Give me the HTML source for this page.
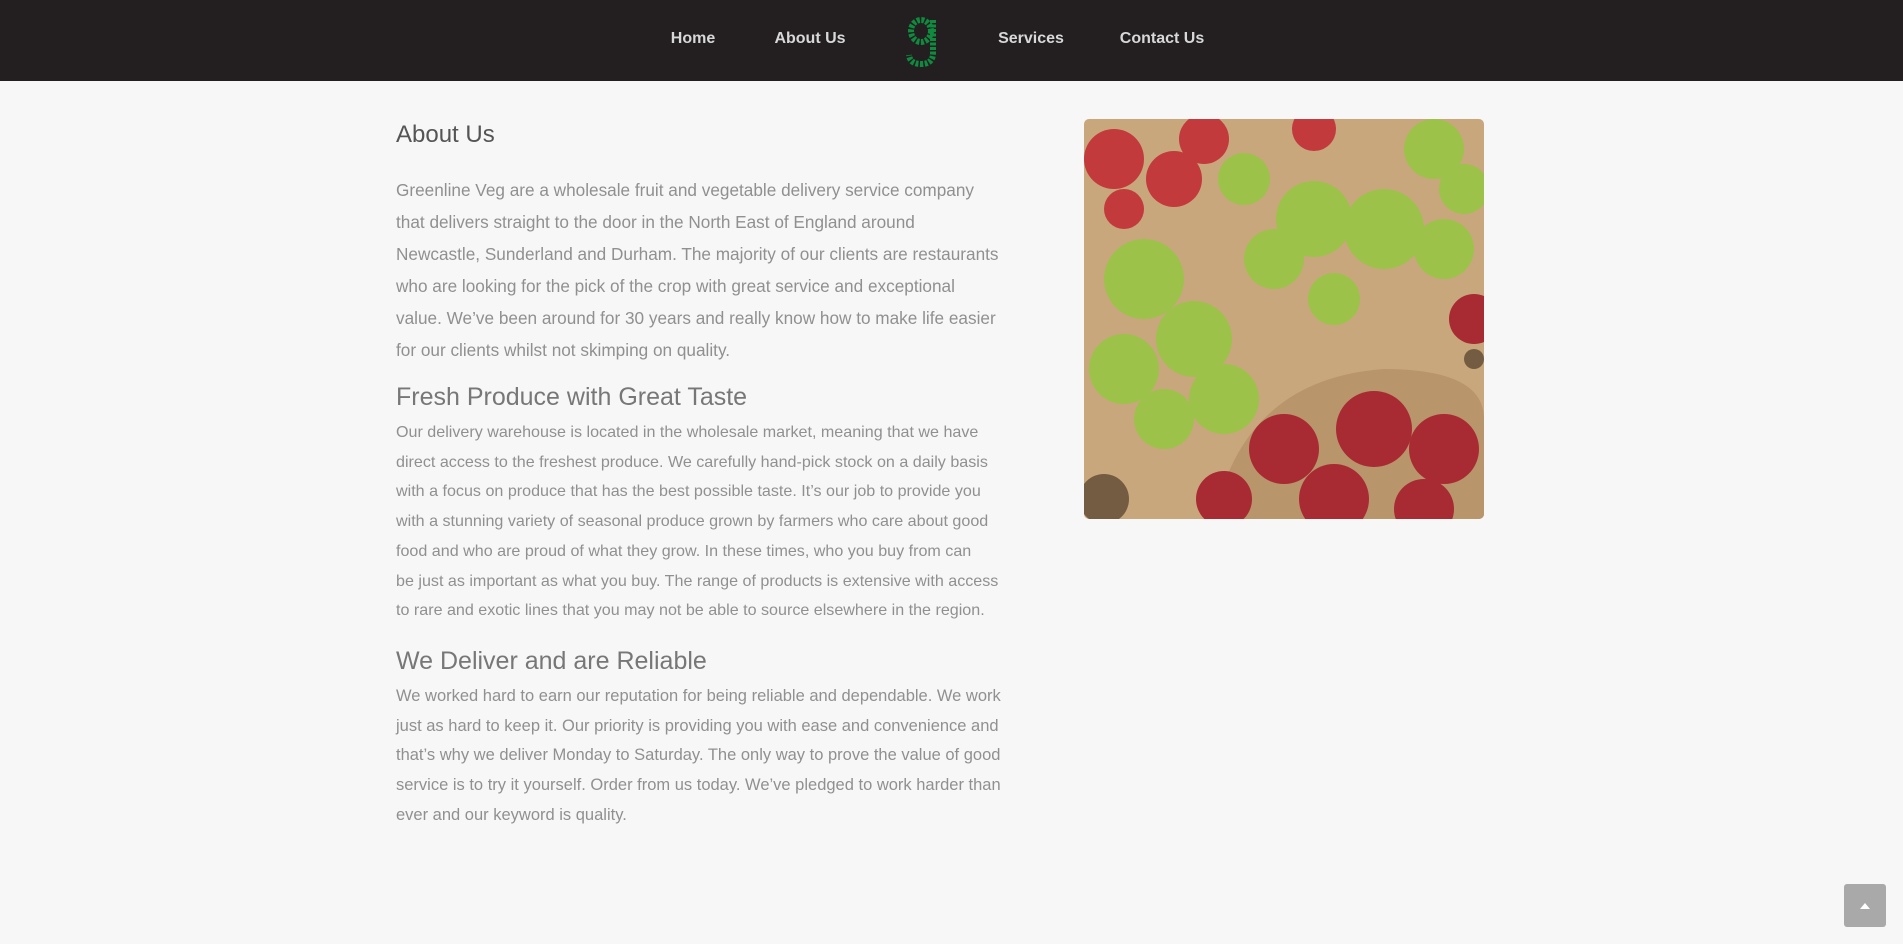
<!DOCTYPE html>
<html><head><meta charset="utf-8"><style>
*{margin:0;padding:0;box-sizing:border-box}
body{width:1903px;height:944px;background:#f7f7f7;font-family:"Liberation Sans",sans-serif;overflow:hidden;position:relative}
.nav{height:81px;background:#231f20;position:relative}
.nav a{position:absolute;top:30px;color:#d8d8d8;font-weight:bold;font-size:16px;text-decoration:none;transform:translateX(-50%);white-space:nowrap}
h1{position:absolute;left:396px;top:121px;font-weight:normal;font-size:24px;color:#555}
h2{position:absolute;left:396px;font-weight:normal;font-size:25px;color:#777}
.p{position:absolute;left:396px;color:#909090;font-size:16.5px;white-space:nowrap}
.img{position:absolute;left:1084px;top:119px;width:400px;height:400px;border-radius:5px;overflow:hidden}
.top{position:absolute;left:1844px;top:884px;width:42px;height:43px;background:#a9a9a9;border-radius:3px}
.top:after{content:"";position:absolute;left:16px;top:19px;border-left:5px solid transparent;border-right:5px solid transparent;border-bottom:6px solid #fff}
</style></head><body>
<div class="nav">
<a style="left:693px">Home</a>
<a style="left:810px">About Us</a>
<svg style="position:absolute;left:904px;top:17px" width="36" height="50" viewBox="0 0 36 50"><g fill="none" stroke="#0f8a3e" stroke-width="6" stroke-dasharray="3 1.5"><ellipse cx="17" cy="14" rx="10" ry="11"/><path d="M29 3 V36 Q29 47 17 47 Q6 47 5 38"/></g></svg>
<a style="left:1031px">Services</a>
<a style="left:1162px">Contact Us</a>
</div>
<h1>About Us</h1>
<div class="p" style="top:174px;line-height:32px;font-size:17.2px">Greenline Veg are a wholesale fruit and vegetable delivery service company<br>that delivers straight to the door in the North East of England around<br>Newcastle, Sunderland and Durham. The majority of our clients are restaurants<br>who are looking for the pick of the crop with great service and exceptional<br>value. We’ve been around for 30 years and really know how to make life easier<br>for our clients whilst not skimping on quality.</div>
<h2 style="top:383px">Fresh Produce with Great Taste</h2>
<div class="p" style="top:418px;line-height:29.7px;font-size:16.1px">Our delivery warehouse is located in the wholesale market, meaning that we have<br>direct access to the freshest produce. We carefully hand-pick stock on a daily basis<br>with a focus on produce that has the best possible taste. It’s our job to provide you<br>with a stunning variety of seasonal produce grown by farmers who care about good<br>food and who are proud of what they grow. In these times, who you buy from can<br>be just as important as what you buy. The range of products is extensive with access<br>to rare and exotic lines that you may not be able to source elsewhere in the region.</div>
<h2 style="top:647px">We Deliver and are Reliable</h2>
<div class="p" style="top:682px;line-height:29.7px">We worked hard to earn our reputation for being reliable and dependable. We work<br>just as hard to keep it. Our priority is providing you with ease and convenience and<br>that’s why we deliver Monday to Saturday. The only way to prove the value of good<br>service is to try it yourself. Order from us today. We’ve pledged to work harder than<br>ever and our keyword is quality.</div>
<div class="img"><svg width="400" height="400" viewBox="0 0 400 400">
<rect width="400" height="400" fill="#c9a77c"/>
<g fill="#c23a3c"><circle cx="30" cy="40" r="30"/><circle cx="90" cy="60" r="28"/><circle cx="120" cy="20" r="25"/><circle cx="230" cy="10" r="22"/><circle cx="40" cy="90" r="20"/></g>
<g fill="#9cc24a"><circle cx="160" cy="60" r="26"/><circle cx="350" cy="30" r="30"/><circle cx="380" cy="70" r="25"/><circle cx="230" cy="100" r="38"/><circle cx="300" cy="110" r="40"/><circle cx="190" cy="140" r="30"/><circle cx="360" cy="130" r="30"/><circle cx="60" cy="160" r="40"/><circle cx="110" cy="220" r="38"/><circle cx="40" cy="250" r="35"/><circle cx="140" cy="280" r="35"/><circle cx="80" cy="300" r="30"/><circle cx="250" cy="180" r="26"/></g>
<path d="M130 400 Q160 260 300 250 Q400 250 400 300 V400Z" fill="#b8956a"/>
<g fill="#a82a33"><circle cx="200" cy="330" r="35"/><circle cx="290" cy="310" r="38"/><circle cx="360" cy="330" r="35"/><circle cx="250" cy="380" r="35"/><circle cx="340" cy="390" r="30"/><circle cx="140" cy="380" r="28"/><circle cx="390" cy="200" r="25"/></g>
<g fill="#3a2a1a" opacity=".6"><circle cx="20" cy="380" r="25"/><circle cx="390" cy="240" r="10"/></g>
</svg></div>
<div class="top"></div>
</body></html>
